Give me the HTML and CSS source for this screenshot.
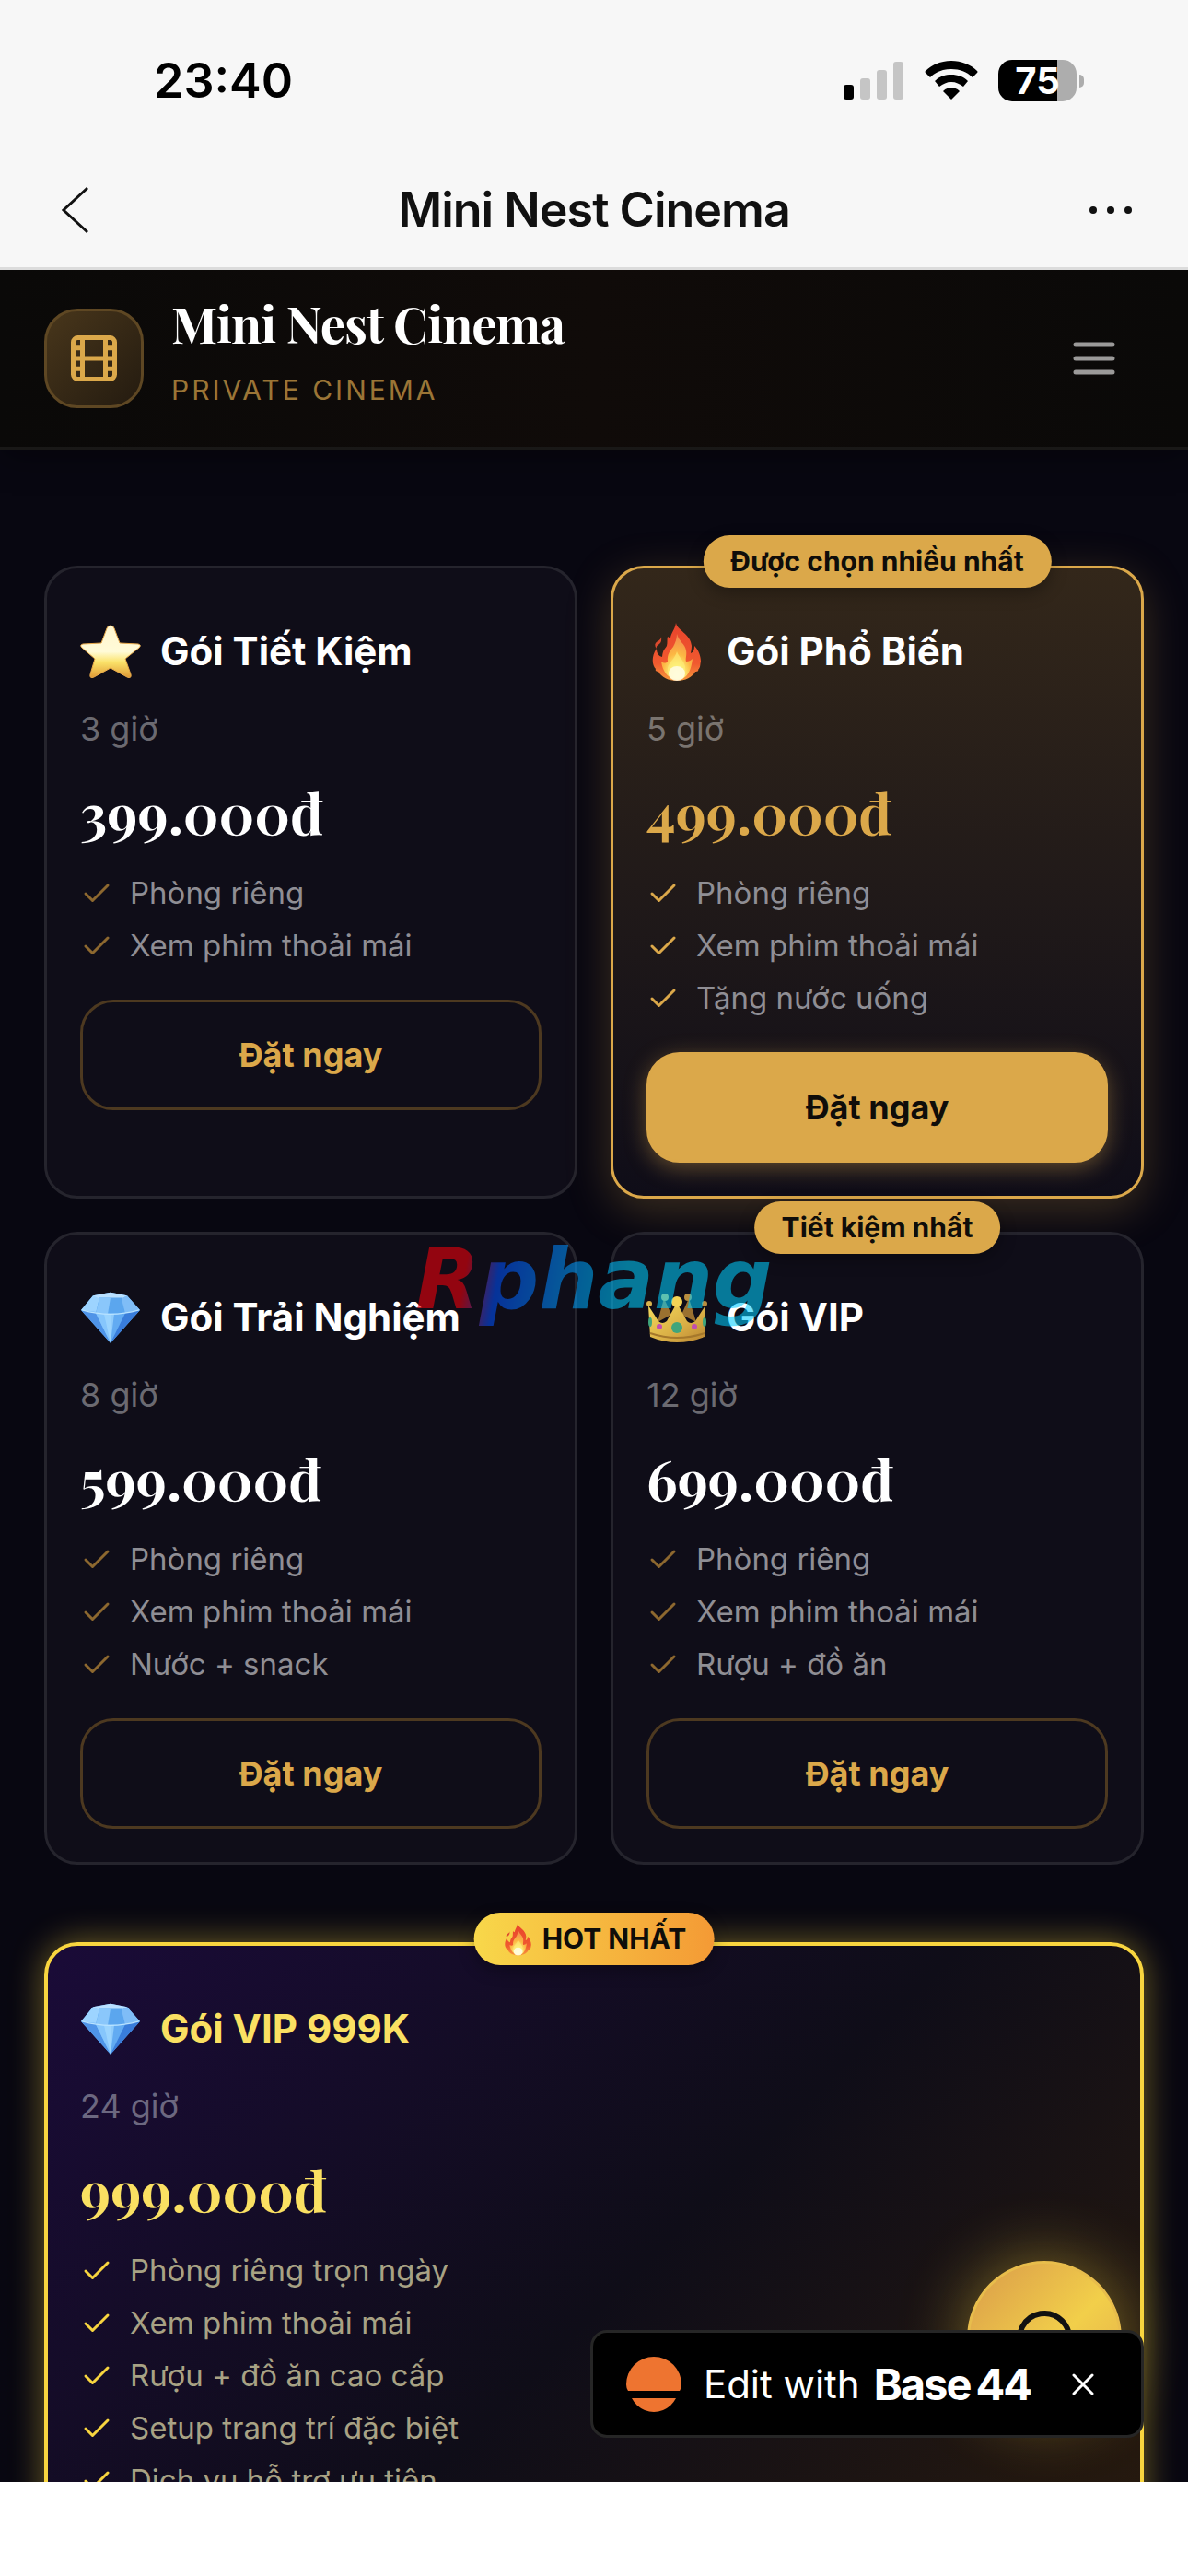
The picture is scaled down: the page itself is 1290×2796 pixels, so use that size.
FILE: index.html
```html
<!DOCTYPE html>
<html lang="vi">
<head>
  <meta charset="UTF-8">
  <meta name="viewport" content="width=device-width, initial-scale=1">
  <title>Mini Nest Cinema</title>
  <link rel="stylesheet" href="styles.css">
</head>
<body>
  <!-- shared icons -->
  <svg class="sprite" aria-hidden="true">
    <defs>
      <linearGradient id="starFill" x1="0" y1="0" x2="0" y2="1">
        <stop offset="0" stop-color="#fff6cf"/>
        <stop offset="0.5" stop-color="#fffbd8"/>
        <stop offset="0.7" stop-color="#fbe36a"/>
        <stop offset="1" stop-color="#e09a35"/>
      </linearGradient>
      <linearGradient id="flameOuter" x1="0" y1="0" x2="0" y2="1">
        <stop offset="0" stop-color="#e8432c"/>
        <stop offset="0.7" stop-color="#f0592f"/>
        <stop offset="1" stop-color="#f79a3c"/>
      </linearGradient>
      <radialGradient id="flameInner" cx="0.5" cy="0.9" r="0.85">
        <stop offset="0" stop-color="#fffde0"/>
        <stop offset="0.25" stop-color="#fdf07a"/>
        <stop offset="0.55" stop-color="#fcb843"/>
        <stop offset="1" stop-color="#f38a4d"/>
      </radialGradient>
      <linearGradient id="crownGold" x1="0" y1="0" x2="1" y2="1">
        <stop offset="0" stop-color="#f6dc5c"/>
        <stop offset="0.6" stop-color="#d9ae45"/>
        <stop offset="1" stop-color="#b98431"/>
      </linearGradient>
      <symbol id="check" viewBox="0 0 24 24">
        <path d="M20 6 9 17l-5-5" fill="none" stroke="currentColor" stroke-width="2" stroke-linecap="round" stroke-linejoin="round"/>
      </symbol>
      <symbol id="star" viewBox="0 0 66 66">
        <path d="M33 5q3 0 4 3l6 16 20 1q4 1 1 4L49 41l6 17q1 5-4 3L33 51 15 61q-5 2-4-3l5-17L2 29q-3-3 1-4l20-1 6-16q1-3 4-3z" fill="url(#starFill)" stroke="#e8a94a" stroke-width="1"/>
      </symbol>
      <symbol id="fire" viewBox="0 0 66 66">
        <path d="M32 2c1 8 16 12 17 25 0 4-1 7-1 8 3-1 4-4 4-8 5 5 7 12 7 17-1 3 0 6-3 9 1 1-1 2-3 2-3 6-11 10-20 10s-17-4-20-10c-2 0-4-1-3-3-4-4-5-14 1-22 0 5 2 8 6 9 1-9 3-8 5-12 1-4 0-7 1-10l3 2C26 14 31 9 32 2z" fill="url(#flameOuter)"/>
        <path d="M16 17q1 5-2 8-4 2-3 5-4-5 1-8 4-2 4-5z" fill="#dc4a2e"/>
        <path d="M33 14c2 8 9 11 10 18 1 5-1 9 0 12 3 0 5-1 7-3-1 8-3 15-7 19-6 5-14 5-19 0-5-4-7-10-8-16 3 2 5 2 7 0-1-8 3-12 6-16 2-4 4-8 4-14z" fill="url(#flameInner)"/>
        <path d="M33 33c2 6 8 10 9 17 1 7-3 14-9 14s-11-6-10-13c1-6 8-10 10-18z" fill="#fdf07a" opacity="0.6"/>
        <ellipse cx="33" cy="57" rx="9" ry="8" fill="#fffde6" opacity="0.85"/>
      </symbol>
      <symbol id="gem" viewBox="0 0 66 66">
        <g transform="translate(0 -2) scale(1 1.12)">
          <path d="M1 24 14 10 33 7l18 3 14 14-32 32z" fill="#6cb4f8"/>
          <path d="M1 24 14 10l7 2-3 14z" fill="#9dd4ff"/>
          <path d="m14 10 19-3 18 3-6 3H21z" fill="#b9e0ff"/>
          <path d="M21 12h24l4 15H17z" fill="#5ba6ee"/>
          <path d="m21 12 12 0-3 16H17z" fill="#8ac7fb"/>
          <path d="m51 10 14 14-16 3-4-14z" fill="#7fbdf7"/>
          <path d="m1 24 16 3 16 29z" fill="#4f94e8"/>
          <path d="m17 27 16 1v28z" fill="#86c6fc"/>
          <path d="m33 28 16-1-16 29z" fill="#62abf2"/>
          <path d="m49 27 16-3-32 32z" fill="#397ddb"/>
          <path d="m26 28 7 28 4-28z" fill="#a4daff" opacity="0.7"/>
          <path d="M2 24q31 8 62 0" fill="none" stroke="#b9e3ff" stroke-width="1"/>
        </g>
      </symbol>
      <symbol id="crown" viewBox="0 0 66 66">
        <path d="M12 38 19 12l8 18zM54 38 46 12l-8 18z" fill="#9a7130"/>
        <path d="m2 20 2 34q29 12 59 0l1-34-11 17q-5 4-9 0L33 17 22 37q-5 4-9 0z" fill="url(#crownGold)"/>
        <circle cx="3" cy="18" r="3" fill="#d8b24c"/>
        <circle cx="63" cy="18" r="3" fill="#b98d3e"/>
        <circle cx="20" cy="11" r="4" fill="#d8b24c"/>
        <circle cx="45" cy="11" r="4" fill="#b98d3e"/>
        <circle cx="33" cy="16" r="6" fill="#f4d455"/>
        <path d="M4 50q29 10 59 0" fill="none" stroke="#a5782b" stroke-width="2"/>
        <circle cx="14" cy="43" r="3" fill="#c24db0"/>
        <circle cx="52" cy="43" r="3" fill="#c24db0"/>
        <circle cx="33" cy="44" r="6" fill="#3fa57c"/>
        <ellipse cx="4" cy="38" rx="2" ry="5" fill="#3fa57c"/>
        <ellipse cx="63" cy="38" rx="2" ry="5" fill="#3fa57c"/>
      </symbol>
    </defs>
  </svg>

  <div class="status-bar">
    <span class="clock">23:40</span>
    <div class="status-icons">
      <svg width="66" height="44" viewBox="0 0 66 44">
        <rect x="0" y="27" width="11" height="16" rx="3" fill="#000"/>
        <rect x="18" y="20" width="11" height="23" rx="3" fill="#c5c5c5"/>
        <rect x="36" y="11" width="11" height="32" rx="3" fill="#c5c5c5"/>
        <rect x="54" y="2" width="11" height="41" rx="3" fill="#c5c5c5"/>
      </svg>
      <svg width="58" height="44" viewBox="0 0 58 44">
        <path d="M29 1C18 1 8 5 1 12q-1 1 0 2l5 5C12 13 20 10 29 10s17 3 23 9l5-5q1-1 0-2C50 5 40 1 29 1z"/>
        <path d="M29 16c-7 0-13 2-18 7l5 6c4-3 8-5 13-5s9 2 13 5l5-6c-5-5-11-7-18-7z"/>
        <path d="M29 30c-3 0-6 1-9 4l9 9 9-9c-3-3-6-4-9-4z"/>
      </svg>
      <div class="battery"><span class="battery-level">75</span></div>
    </div>
  </div>

  <nav class="nav-bar">
    <button class="icon-btn" aria-label="Back">
      <svg width="42" height="54" viewBox="0 0 42 54" fill="none" stroke="#111" stroke-width="3">
        <path d="M29 3 3 27l26 24"/>
      </svg>
    </button>
    <h1>Mini Nest Cinema</h1>
    <button class="icon-btn" aria-label="More">
      <svg width="48" height="54" viewBox="0 0 48 54" fill="#111">
        <circle cx="5" cy="27" r="4"/>
        <circle cx="24" cy="27" r="4"/>
        <circle cx="43" cy="27" r="4"/>
      </svg>
    </button>
  </nav>

  <div class="viewport">
    <header class="site-header">
      <div class="logo">
        <svg width="60" height="60" viewBox="0 0 24 24" fill="none" stroke="#dba84a" stroke-width="2">
          <rect x="3" y="3" width="18" height="18" rx="2"/>
          <path d="M7 3v18M17 3v18M3 7.500h4M3 12h18M3 16.500h4M17 7.500h4M17 16.500h4"/>
        </svg>
      </div>
      <div class="brand">
        <h2>Mini Nest Cinema</h2>
        <p>PRIVATE CINEMA</p>
      </div>
      <button class="icon-btn" aria-label="Menu">
        <svg width="60" height="60" viewBox="0 0 24 24" fill="none" stroke="#9b9a99" stroke-width="2" stroke-linecap="round">
          <path d="M4 6h16M4 12h16M4 18h16"/>
        </svg>
      </button>
    </header>

    <main class="scroller">
      <div class="plans">
        <section class="card">
          <h3><svg class="emoji"><use href="#star"/></svg>Gói Tiết Kiệm</h3>
          <p class="hours">3 giờ</p>
          <p class="price">399.000đ</p>
          <ul>
            <li><svg><use href="#check"/></svg>Phòng riêng</li>
            <li><svg><use href="#check"/></svg>Xem phim thoải mái</li>
          </ul>
          <button class="book">Đặt ngay</button>
        </section>

        <section class="card popular">
          <span class="badge">Được chọn nhiều nhất</span>
          <h3><svg class="emoji"><use href="#fire"/></svg>Gói Phổ Biến</h3>
          <p class="hours">5 giờ</p>
          <p class="price">499.000đ</p>
          <ul>
            <li><svg><use href="#check"/></svg>Phòng riêng</li>
            <li><svg><use href="#check"/></svg>Xem phim thoải mái</li>
            <li><svg><use href="#check"/></svg>Tặng nước uống</li>
          </ul>
          <button class="book">Đặt ngay</button>
        </section>

        <section class="card">
          <h3><svg class="emoji"><use href="#gem"/></svg>Gói Trải Nghiệm</h3>
          <p class="hours">8 giờ</p>
          <p class="price">599.000đ</p>
          <ul>
            <li><svg><use href="#check"/></svg>Phòng riêng</li>
            <li><svg><use href="#check"/></svg>Xem phim thoải mái</li>
            <li><svg><use href="#check"/></svg>Nước + snack</li>
          </ul>
          <button class="book">Đặt ngay</button>
        </section>

        <section class="card">
          <span class="badge">Tiết kiệm nhất</span>
          <h3><svg class="emoji"><use href="#crown"/></svg>Gói VIP</h3>
          <p class="hours">12 giờ</p>
          <p class="price">699.000đ</p>
          <ul>
            <li><svg><use href="#check"/></svg>Phòng riêng</li>
            <li><svg><use href="#check"/></svg>Xem phim thoải mái</li>
            <li><svg><use href="#check"/></svg>Rượu + đồ ăn</li>
          </ul>
          <button class="book">Đặt ngay</button>
        </section>

        <section class="card vip">
          <span class="badge hot"><svg><use href="#fire"/></svg>HOT NHẤT</span>
          <h3><svg class="emoji"><use href="#gem"/></svg>Gói VIP 999K</h3>
          <p class="hours">24 giờ</p>
          <p class="price">999.000đ</p>
          <ul>
            <li><svg><use href="#check"/></svg>Phòng riêng trọn ngày</li>
            <li><svg><use href="#check"/></svg>Xem phim thoải mái</li>
            <li><svg><use href="#check"/></svg>Rượu + đồ ăn cao cấp</li>
            <li><svg><use href="#check"/></svg>Setup trang trí đặc biệt</li>
            <li><svg><use href="#check"/></svg>Dịch vụ hỗ trợ ưu tiên</li>
          </ul>
          <button class="book">Đặt ngay</button>
        </section>
      </div>
    </main>

    <button class="chat" aria-label="Chat">
      <svg width="72" height="72" viewBox="0 0 24 24" fill="none" stroke="#111" stroke-width="2" stroke-linecap="round" stroke-linejoin="round">
        <path d="M7.900 20A9 9 0 1 0 4 16.100L2 22z"/>
      </svg>
    </button>

    <div class="edit-bar">
      <svg width="60" height="60" viewBox="0 0 60 60" fill="#ee7430">
        <path d="M0 30a30 30 0 0 1 60 0q0 4-2 7H2q-2-3-2-7z"/>
        <path d="M6 45h48q-2 4-6 8-8 7-18 7t-18-7q-4-4-6-8z"/>
      </svg>
      <span>Edit with</span>
      <strong>Base<span>44</span></strong>
      <button class="icon-btn" aria-label="Close">
        <svg width="24" height="24" viewBox="0 0 24 24" fill="none" stroke="#fff" stroke-width="3" stroke-linecap="round">
          <path d="m2 2 20 20M22 2 2 22"/>
        </svg>
      </button>
    </div>
  </div>

  <div class="home-strip"></div>
  <div class="watermark">Rphang</div>
</body>
</html>
```

FILE: styles.css
```css
* {
  box-sizing: border-box;
}

body {
  margin: 0;
  height: 100vh;
  display: flex;
  flex-direction: column;
  background: #fff;
  font-family: Inter, "Noto Sans", sans-serif;
  overflow: hidden;
}

h1, h2, h3, p, ul {
  margin: 0;
  padding: 0;
}

button {
  font-family: inherit;
  cursor: pointer;
}

.sprite {
  position: absolute;
  width: 0;
  height: 0;
}

.icon-btn {
  display: flex;
  padding: 0;
  border: none;
  background: none;
}

/* phone bars */
.status-bar {
  display: flex;
  justify-content: space-between;
  align-items: center;
  height: 174px;
  padding: 0 113px 0 167px;
  background: #f7f7f7;
}

.clock {
  font-size: 52px;
  font-weight: 600;
}

.status-icons {
  display: flex;
  align-items: center;
  gap: 22px;
}

.battery {
  position: relative;
  width: 85px;
  height: 45px;
  margin-right: 8px;
  border-radius: 15px;
  background: linear-gradient(90deg, #000 75%, #adadad 75%);
  color: #fff;
  text-align: center;
}

.battery::after {
  content: "";
  position: absolute;
  right: -8px;
  top: 16px;
  width: 5px;
  height: 14px;
  border-radius: 0 5px 5px 0;
  background: #adadad;
}

.battery-level {
  font-size: 40px;
  font-weight: 700;
  line-height: 45px;
}

.nav-bar {
  position: relative;
  z-index: 1;
  display: flex;
  justify-content: space-between;
  align-items: center;
  height: 119px;
  padding: 0 60px 9px 66px;
  border-bottom: 3px solid #dcdcdc;
  background: #f7f7f7;
  color: #111;
}

.nav-bar h1 {
  font-size: 52px;
  font-weight: 600;
  letter-spacing: -1px;
}

/* web page */
.viewport {
  position: relative;
  flex: 1;
  min-height: 0;
  display: flex;
  flex-direction: column;
  background: #080711;
}

.site-header {
  display: flex;
  align-items: center;
  gap: 30px;
  padding: 22px 72px 22px 48px;
  border-bottom: 3px solid #191817;
  background: linear-gradient(90deg, #0a0908, #100b09 50%, #0a0908);
  box-shadow: 0 6px 36px rgba(0, 0, 0, 0.4);
}

.logo {
  display: flex;
  align-items: center;
  justify-content: center;
  width: 108px;
  height: 108px;
  border: 3px solid #5e4723;
  border-radius: 36px;
  background: linear-gradient(135deg, #48361b, #241b10);
}

.brand {
  flex: 1;
  padding-bottom: 16px;
}

.brand h2 {
  color: #fff;
  font-family: "Playfair Display", "Liberation Serif", serif;
  font-size: 54px;
  line-height: 72px;
  letter-spacing: -1px;
}

.brand p {
  margin-top: 12px;
  color: #9b7536;
  font-size: 30px;
  line-height: 48px;
  letter-spacing: 3px;
}

.scroller {
  flex: 1;
  min-height: 0;
  padding: 126px 48px 96px;
  overflow-y: auto;
  scrollbar-width: none;
}

.plans {
  display: grid;
  grid-template-columns: 1fr 1fr;
  gap: 36px;
}

.card {
  position: relative;
  padding: 45px 36px 36px;
  border: 3px solid #25242d;
  border-radius: 36px;
  background: #0f0d18;
  color: #fff;
}

.card h3 {
  display: flex;
  align-items: center;
  gap: 21px;
  font-size: 42px;
  font-weight: 700;
  line-height: 90px;
}

.emoji {
  width: 66px;
  height: 66px;
}

.hours {
  margin-top: 15px;
  color: #6b6a71;
  font-size: 36px;
  line-height: 48px;
}

.price {
  margin-top: 24px;
  font-family: "Playfair Display", "Liberation Serif", serif;
  font-size: 60px;
  font-weight: 700;
  line-height: 84px;
}

.card ul {
  display: grid;
  gap: 12px;
  margin-top: 24px;
  list-style: none;
}

.card li {
  display: flex;
  align-items: center;
  gap: 18px;
  color: #8f8e94;
  font-size: 33px;
  line-height: 45px;
}

.card li svg {
  width: 36px;
  height: 36px;
  color: #8d682f;
}

.book {
  display: block;
  width: 100%;
  height: 120px;
  margin-top: 36px;
  border: 3px solid #4d3920;
  border-radius: 36px;
  background: none;
  color: #dba84a;
  font-size: 36px;
  font-weight: 700;
}

.badge {
  position: absolute;
  top: -36px;
  left: 50%;
  display: flex;
  align-items: center;
  padding: 0 30px;
  border-radius: 30px;
  background: #dba84a;
  box-shadow: 0 6px 18px rgba(0, 0, 0, 0.3);
  color: #0f0d0a;
  font-size: 30px;
  font-weight: 700;
  line-height: 57px;
  white-space: nowrap;
  transform: translateX(-50%);
}

.popular {
  border-color: #dba84a;
  background: linear-gradient(180deg, #33271a, #0f0d18);
  box-shadow: 0 12px 48px rgba(219, 168, 74, 0.25);
}

.card.popular .price,
.card.popular li svg {
  color: #dba84a;
}

.popular .hours {
  color: #7a746f;
}

.popular .book {
  border-color: #dba84a;
  background: #dba84a;
  box-shadow: 0 6px 24px rgba(219, 168, 74, 0.4);
  color: #0f0d0a;
}

.vip {
  grid-column: 1 / -1;
  margin-top: 48px;
  padding-left: 35px;
  border: 4px solid #f8d53f;
  background: linear-gradient(135deg, #1a0b38, #0f0d18 50%, #2b1c0c);
  box-shadow: 0 0 36px rgba(248, 213, 63, 0.45);
}

.vip h3,
.vip .price {
  color: #fae062;
}

.vip .hours {
  color: #6c6880;
}

.card.vip li {
  color: #a8a284;
}

.card.vip li svg {
  color: #f8d53f;
}

.hot {
  background: linear-gradient(90deg, #f8d84a, #f49a35);
}

.hot svg {
  width: 36px;
  height: 36px;
  margin-right: 8px;
}

.chat {
  position: absolute;
  right: 72px;
  bottom: 72px;
  display: flex;
  align-items: center;
  justify-content: center;
  width: 168px;
  height: 168px;
  border: 3px solid #e8bd4c;
  border-radius: 50%;
  background: linear-gradient(135deg, #e0a94a 15%, #f2cf4a 55%, #e0a94a);
  box-shadow: 0 0 72px rgba(248, 213, 63, 0.45);
}

.edit-bar {
  position: absolute;
  right: 48px;
  bottom: 48px;
  display: flex;
  align-items: center;
  height: 117px;
  padding: 0 51px 0 36px;
  border: 3px solid #262626;
  border-radius: 18px;
  background: #000;
  color: #fff;
  font-size: 42px;
}

.edit-bar > span {
  margin: 0 15px 0 24px;
}

.edit-bar strong {
  margin-right: 45px;
  font-size: 47px;
  letter-spacing: -2px;
}

.edit-bar strong span {
  margin-left: 6px;
}

.home-strip {
  height: 102px;
  background: #fff;
}

.watermark {
  position: absolute;
  top: 50%;
  left: 50%;
  padding-bottom: 20px;
  background: linear-gradient(100deg, #fa000a 15%, #0050ff 24%, #0096ff 42%, #00ceff 58%);
  background-clip: text;
  color: transparent;
  font-family: "DejaVu Sans", sans-serif;
  font-size: 90px;
  font-style: italic;
  font-weight: 700;
  opacity: 0.56;
  transform: translate(-50%, -50%);
  pointer-events: none;
}
```
